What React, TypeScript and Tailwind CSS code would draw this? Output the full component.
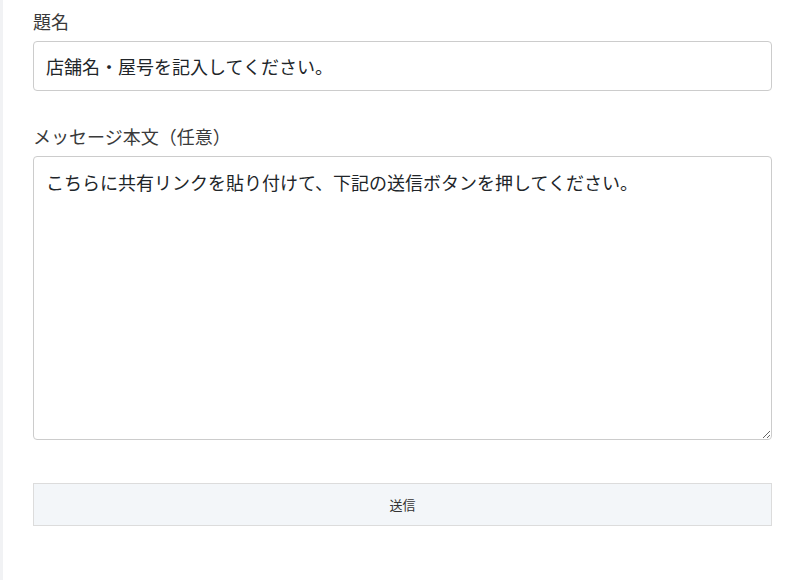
export default function App() {
  const font = { fontFamily: '"Noto Sans CJK JP", "Noto Sans", sans-serif' };
  return (
    <div className="flex min-h-[580px] bg-white text-[#212529]" style={font}>
      <div className="w-[3px] shrink-0 bg-[#f1f2f4]" />
      <form className="ml-[30px] flex w-[739px] flex-col pt-[10px]">
        <label className="mb-[8px] text-[18px] leading-[23px] text-[#3a3a3a]">題名</label>
        <input
          type="text"
          defaultValue="店舗名・屋号を記入してください。"
          className="h-[50px] rounded-[4px] border border-[#ccc] px-[12px] text-[18px] text-[#212529] outline-none"
        />
        <label className="mb-[8px] mt-[34px] text-[18px] leading-[23px] text-[#3a3a3a]">
          メッセージ本文（任意）
        </label>
        <textarea
          defaultValue="こちらに共有リンクを貼り付けて、下記の送信ボタンを押してください。"
          className="h-[284px] rounded-[4px] border border-[#ccc] px-[12px] py-[12px] text-[18px] leading-[26px] text-[#212529] outline-none"
        />
        <button
          type="button"
          className="mt-[43px] h-[43px] border border-[#dcdcdc] bg-[#f3f6f9] text-[13px] text-[#333]"
        >
          送信
        </button>
      </form>
    </div>
  );
}
